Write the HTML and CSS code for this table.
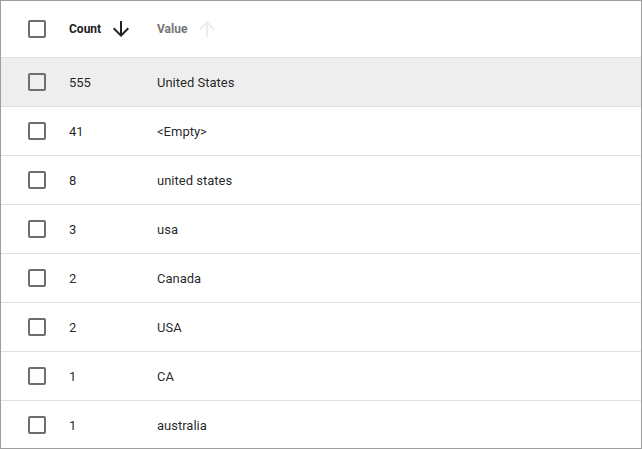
FILE: index.html
```html
<!DOCTYPE html>
<html>
<head>
<meta charset="utf-8">
<link rel="stylesheet" href="styles.css">
</head>
<body>
<div class="table">
  <div class="row head">
    <div class="cb-cell"><span class="cb"></span></div>
    <div class="count-cell"><span class="hlabel">Count</span><svg class="sort" viewBox="0 0 24 24"><path d="M20 12l-1.41-1.41L13 16.17V4h-2v12.17l-5.58-5.59L4 12l8 8 8-8z" fill="#212121"/></svg></div>
    <div class="value-cell"><span class="hlabel dim">Value</span><svg class="sort" viewBox="0 0 24 24"><path d="M4 12l1.41 1.41L11 7.83V20h2V7.83l5.58 5.59L20 12l-8-8-8 8z" fill="#eeeeee"/></svg></div>
  </div>
  <div class="row hover">
    <div class="cb-cell"><span class="cb"></span></div>
    <div class="count-cell">555</div>
    <div class="value-cell">United States</div>
  </div>
  <div class="row">
    <div class="cb-cell"><span class="cb"></span></div>
    <div class="count-cell">41</div>
    <div class="value-cell">&lt;Empty&gt;</div>
  </div>
  <div class="row">
    <div class="cb-cell"><span class="cb"></span></div>
    <div class="count-cell">8</div>
    <div class="value-cell">united states</div>
  </div>
  <div class="row">
    <div class="cb-cell"><span class="cb"></span></div>
    <div class="count-cell">3</div>
    <div class="value-cell">usa</div>
  </div>
  <div class="row">
    <div class="cb-cell"><span class="cb"></span></div>
    <div class="count-cell">2</div>
    <div class="value-cell">Canada</div>
  </div>
  <div class="row">
    <div class="cb-cell"><span class="cb"></span></div>
    <div class="count-cell">2</div>
    <div class="value-cell">USA</div>
  </div>
  <div class="row">
    <div class="cb-cell"><span class="cb"></span></div>
    <div class="count-cell">1</div>
    <div class="value-cell">CA</div>
  </div>
  <div class="row last">
    <div class="cb-cell"><span class="cb"></span></div>
    <div class="count-cell">1</div>
    <div class="value-cell">australia</div>
  </div>
</div>
</body>
</html>
```
FILE: styles.css
```css
html, body {
  margin: 0;
  padding: 0;
  background: #fff;
}
.table {
  width: 640px;
  height: 447px;
  border: 1px solid #9e9e9e;
  font-family: Roboto, "Noto Sans", sans-serif;
  font-size: 13px;
  color: rgba(0, 0, 0, 0.87);
  overflow: hidden;
}
.row {
  display: grid;
  grid-template-columns: 68px 88px 1fr;
  align-items: center;
  height: 48px;
  border-bottom: 1px solid #e0e0e0;
}
.row.head {
  height: 56px;
}
.row.hover {
  background: #eeeeee;
}
.row.last {
  border-bottom: none;
}
.cb-cell {
  display: flex;
  padding-left: 27px;
}
.cb {
  width: 14px;
  height: 14px;
  border: 2px solid #6e6e6e;
  border-radius: 2px;
}
.count-cell, .value-cell {
  display: flex;
  align-items: center;
}
.hlabel {
  font-size: 12px;
  font-weight: 700;
  color: #212121;
}
.hlabel.dim {
  color: #757575;
}
.sort {
  width: 24px;
  height: 24px;
  margin-left: 8px;
}
```
